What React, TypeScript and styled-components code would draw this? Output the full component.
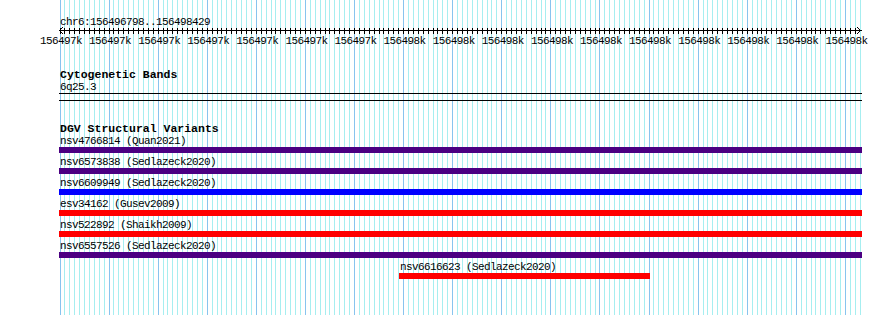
import React from "react";
import styled, { createGlobalStyle } from "styled-components";

const GlobalStyle = createGlobalStyle`
  body {
    margin: 0;
    background: #fff;
  }
`;

// view: 156496798..156498429, drawn from x=59 to x=862
const ORIGIN_X = 60; // 156496800
const PX_PER_10BP = 4.909;
const MINOR_COUNT = 164;
const TRACK_LEFT = 59;
const TRACK_WIDTH = 803;

const Page = styled.div`
  position: relative;
  width: 890px;
  height: 315px;
  overflow: hidden;
  padding-left: ${TRACK_LEFT}px;
  box-sizing: border-box;
  font-family: "Liberation Mono", "DejaVu Sans Mono", monospace;
  color: #000;
`;

const GridLine = styled.div<{ $major?: boolean }>`
  position: absolute;
  top: 0;
  bottom: 0;
  width: 1px;
  background: ${(p) => (p.$major ? "#88c4ee" : "#a6eef0")};
`;

const Content = styled.div`
  position: relative;
  width: ${TRACK_WIDTH}px;
`;

const LocationLabel = styled.div`
  padding-top: 16px;
  height: 12px;
  line-height: 12px;
  font-size: 11px;
  letter-spacing: -0.6px;
  padding-left: 1px;
`;

const RulerSvg = styled.svg`
  display: block;
  margin-top: -3px;
`;

const ScaleRow = styled.div`
  position: relative;
  height: 12px;
  margin-left: -${TRACK_LEFT}px;
`;

const ScaleLabel = styled.span`
  position: absolute;
  top: 0;
  font-size: 11px;
  letter-spacing: -0.6px;
  line-height: 12px;
  transform: translateX(-50%);
  white-space: nowrap;
`;

const Track = styled.div<{ $top: number; $borderTop?: boolean; $borderBottom?: boolean }>`
  margin-top: ${(p) => p.$top}px;
  border-top: ${(p) => (p.$borderTop ? "1px solid #000" : "none")};
  border-bottom: ${(p) => (p.$borderBottom ? "1px solid #000" : "none")};
`;

const TrackTitle = styled.div<{ $gap?: number }>`
  margin-top: ${(p) => p.$gap ?? 0}px;
  font-weight: bold;
  font-size: 11.5px;
  line-height: 13px;
  height: 13px;
  padding-left: 1px;
`;

const FeatureLabel = styled.div`
  font-size: 11px;
  letter-spacing: -0.6px;
  line-height: 12px;
  height: 12px;
  padding-left: 1px;
  white-space: nowrap;
`;

const FeatureRow = styled.div<{ $offset?: number; $width?: number }>`
  margin-left: ${(p) => p.$offset ?? 0}px;
  width: ${(p) => (p.$width ? `${p.$width}px` : "auto")};
  padding-bottom: 3px;
`;

const Bar = styled.div<{ $color: string }>`
  height: 6px;
  background: ${(p) => p.$color};
`;

const INDIGO = "#4b0082";

const variants = [
  { name: "nsv4766814 (Quan2021)", color: INDIGO },
  { name: "nsv6573838 (Sedlazeck2020)", color: INDIGO },
  { name: "nsv6609949 (Sedlazeck2020)", color: "#0000ff" },
  { name: "esv34162 (Gusev2009)", color: "#ff0000" },
  { name: "nsv522892 (Shaikh2009)", color: "#ff0000" },
  { name: "nsv6557526 (Sedlazeck2020)", color: INDIGO },
  { name: "nsv6616623 (Sedlazeck2020)", color: "#ff0000", offset: 340, width: 251 },
];

const scaleLabels = Array.from({ length: 17 }, (_, i) =>
  i < 7 ? "156497k" : "156498k"
);

const Ruler: React.FC = () => {
  const ticks = Array.from({ length: MINOR_COUNT - 1 }, (_, k) =>
    Math.floor(ORIGIN_X - TRACK_LEFT + k * PX_PER_10BP) + 0.5
  );
  return (
    <RulerSvg width={TRACK_WIDTH} height={10} shapeRendering="crispEdges">
      <line x1={0} y1={5.5} x2={TRACK_WIDTH} y2={5.5} stroke="#000" />
      {ticks.map((x, i) => (
        <line key={i} x1={x} y1={3} x2={x} y2={9} stroke="#000" />
      ))}
      <polyline points="4,2 0.5,5.5 4,9" fill="none" stroke="#000" shapeRendering="auto" />
      <polyline
        points={`${TRACK_WIDTH - 5},2 ${TRACK_WIDTH - 1.5},5.5 ${TRACK_WIDTH - 5},9`}
        fill="none"
        stroke="#000"
        shapeRendering="auto"
      />
    </RulerSvg>
  );
};

const App: React.FC = () => {
  return (
    <>
      <GlobalStyle />
      <Page>
        {Array.from({ length: MINOR_COUNT }, (_, k) => (
          <GridLine
            key={k}
            $major={k % 10 === 0}
            style={{ left: Math.floor(ORIGIN_X + k * PX_PER_10BP) }}
          />
        ))}
        <Content>
          <LocationLabel>chr6:156496798..156498429</LocationLabel>
          <Ruler />
          <ScaleRow>
            {scaleLabels.map((label, i) => (
              <ScaleLabel key={i} style={{ left: ORIGIN_X + i * PX_PER_10BP * 10 + 1 }}>
                {label}
              </ScaleLabel>
            ))}
          </ScaleRow>

          <Track $top={21} $borderBottom>
            <TrackTitle>Cytogenetic Bands</TrackTitle>
            <FeatureLabel>6q25.3</FeatureLabel>
          </Track>

          <Track $top={6} $borderTop>
            <TrackTitle $gap={21}>DGV Structural Variants</TrackTitle>
            {variants.map((v) => (
              <FeatureRow key={v.name} $offset={v.offset} $width={v.width}>
                <FeatureLabel>{v.name}</FeatureLabel>
                <Bar $color={v.color} />
              </FeatureRow>
            ))}
          </Track>
        </Content>
      </Page>
    </>
  );
};

export default App;
